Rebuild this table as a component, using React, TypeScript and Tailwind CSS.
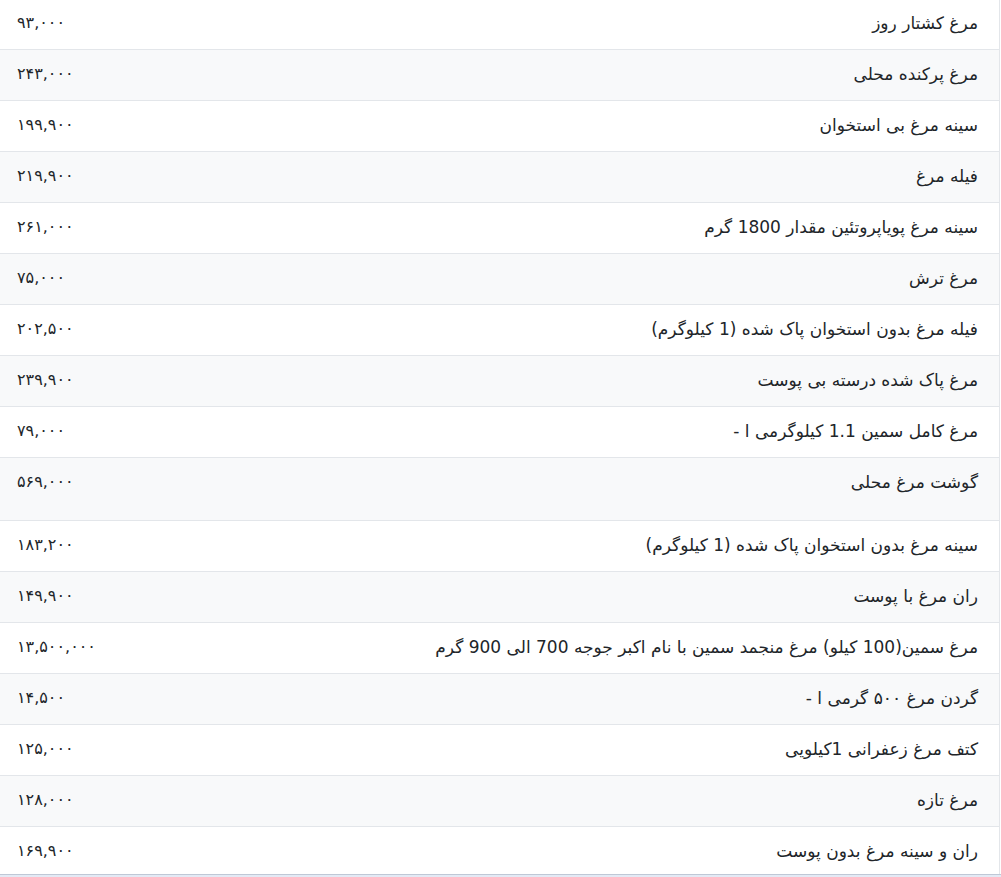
const rows: { name: string; price: string; tall?: boolean }[] = [
  { name: 'مرغ کشتار روز', price: '۹۳,۰۰۰' },
  { name: 'مرغ پرکنده محلی', price: '۲۴۳,۰۰۰' },
  { name: 'سینه مرغ بی استخوان', price: '۱۹۹,۹۰۰' },
  { name: 'فیله مرغ', price: '۲۱۹,۹۰۰' },
  { name: 'سینه مرغ پویاپروتئین مقدار 1800 گرم', price: '۲۶۱,۰۰۰' },
  { name: 'مرغ ترش', price: '۷۵,۰۰۰' },
  { name: 'فیله مرغ بدون استخوان پاک شده (1 کیلوگرم)', price: '۲۰۲,۵۰۰' },
  { name: 'مرغ پاک شده درسته بی پوست', price: '۲۳۹,۹۰۰' },
  { name: 'مرغ کامل سمین 1.1 کیلوگرمی ا -', price: '۷۹,۰۰۰' },
  { name: 'گوشت مرغ محلی', price: '۵۶۹,۰۰۰', tall: true },
  { name: 'سینه مرغ بدون استخوان پاک شده (1 کیلوگرم)', price: '۱۸۳,۲۰۰' },
  { name: 'ران مرغ با پوست', price: '۱۴۹,۹۰۰' },
  { name: 'مرغ سمین(100 کیلو) مرغ منجمد سمین با نام اکبر جوجه 700 الی 900 گرم', price: '۱۳,۵۰۰,۰۰۰' },
  { name: 'گردن مرغ ۵۰۰ گرمی ا -', price: '۱۴,۵۰۰' },
  { name: 'کتف مرغ زعفرانی 1کیلویی', price: '۱۲۵,۰۰۰' },
  { name: 'مرغ تازه', price: '۱۲۸,۰۰۰' },
  { name: 'ران و سینه مرغ بدون پوست', price: '۱۶۹,۹۰۰' },
];

export default function App() {
  return (
    <div
      className="h-[877px] overflow-hidden bg-[#e3eaf5]"
      style={{ fontFamily: '"DejaVu Sans", "Noto Sans", sans-serif' }}
    >
      <div className="h-[875px] overflow-hidden bg-white border-b border-[#bfc8d6]">
        <table dir="rtl" className="-mt-[1px] w-[1000px] border-collapse border-r border-[#e3e6ea] text-[#212529]">
          <tbody>
            {rows.map((r, i) => (
              <tr
                key={i}
                className={`${i % 2 === 1 ? 'bg-[#f8f9fa]' : 'bg-white'} border-b border-[#e3e6ea]`}
              >
                <td
                  className={`pr-[21px] pl-3 text-right align-top text-[17px] leading-6 ${
                    r.tall ? 'pt-[12px] pb-[26px]' : 'pt-[12px] pb-[14px]'
                  }`}
                >
                  {r.name}
                </td>
                <td className="w-[120px] pl-[17px] text-left align-top text-[16px] leading-6 pt-[12px]">
                  {r.price}
                </td>
              </tr>
            ))}
          </tbody>
        </table>
      </div>
    </div>
  );
}
